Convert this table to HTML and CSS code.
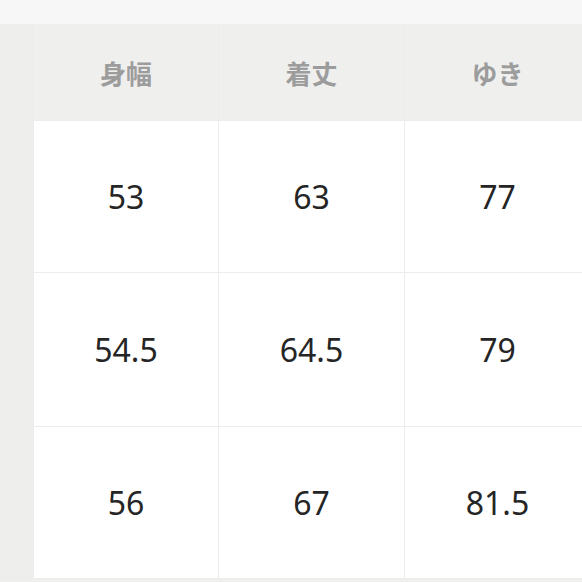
FILE: index.html
```html
<!DOCTYPE html>
<html lang="ja">
<head>
<meta charset="utf-8">
<link rel="stylesheet" href="styles.css">
</head>
<body>
<div class="page">
  <div class="topbar"></div>
  <div class="table">
    <div class="side"></div>
    <div class="head">身幅</div>
    <div class="head">着丈</div>
    <div class="head">ゆき</div>

    <div class="side"></div>
    <div class="cell">53</div>
    <div class="cell">63</div>
    <div class="cell">77</div>

    <div class="side"></div>
    <div class="cell">54.5</div>
    <div class="cell">64.5</div>
    <div class="cell">79</div>

    <div class="side"></div>
    <div class="cell">56</div>
    <div class="cell">67</div>
    <div class="cell">81.5</div>
  </div>
</div>
</body>
</html>
```
FILE: styles.css
```css
html, body {
  margin: 0;
  padding: 0;
  background: #efefee;
  overflow: hidden;
}
.page {
  width: 582px;
  height: 582px;
  overflow: hidden;
  background: #efefee;
}
.topbar {
  height: 24px;
  background: #f7f7f7;
}
.table {
  display: grid;
  grid-template-columns: 33px 184px 185px 185px;
  grid-template-rows: 96px 151px 153px 151px;
  gap: 1px;
  background: #ececec;
  width: 610px;
  border-bottom: 1px solid #ececec;
}
.side {
  background: #eeeeed;
}
.head {
  background: #efefee;
  display: flex;
  align-items: center;
  justify-content: center;
  font-family: "Noto Sans CJK JP", "Noto Sans", sans-serif;
  font-weight: 700;
  font-size: 26px;
  color: #9c9c9c;
  padding-top: 1px;
}
.cell {
  background: #ffffff;
  display: flex;
  align-items: center;
  justify-content: center;
  font-family: "Noto Sans", "Open Sans", sans-serif;
  font-size: 32px;
  color: #252525;
}
```
